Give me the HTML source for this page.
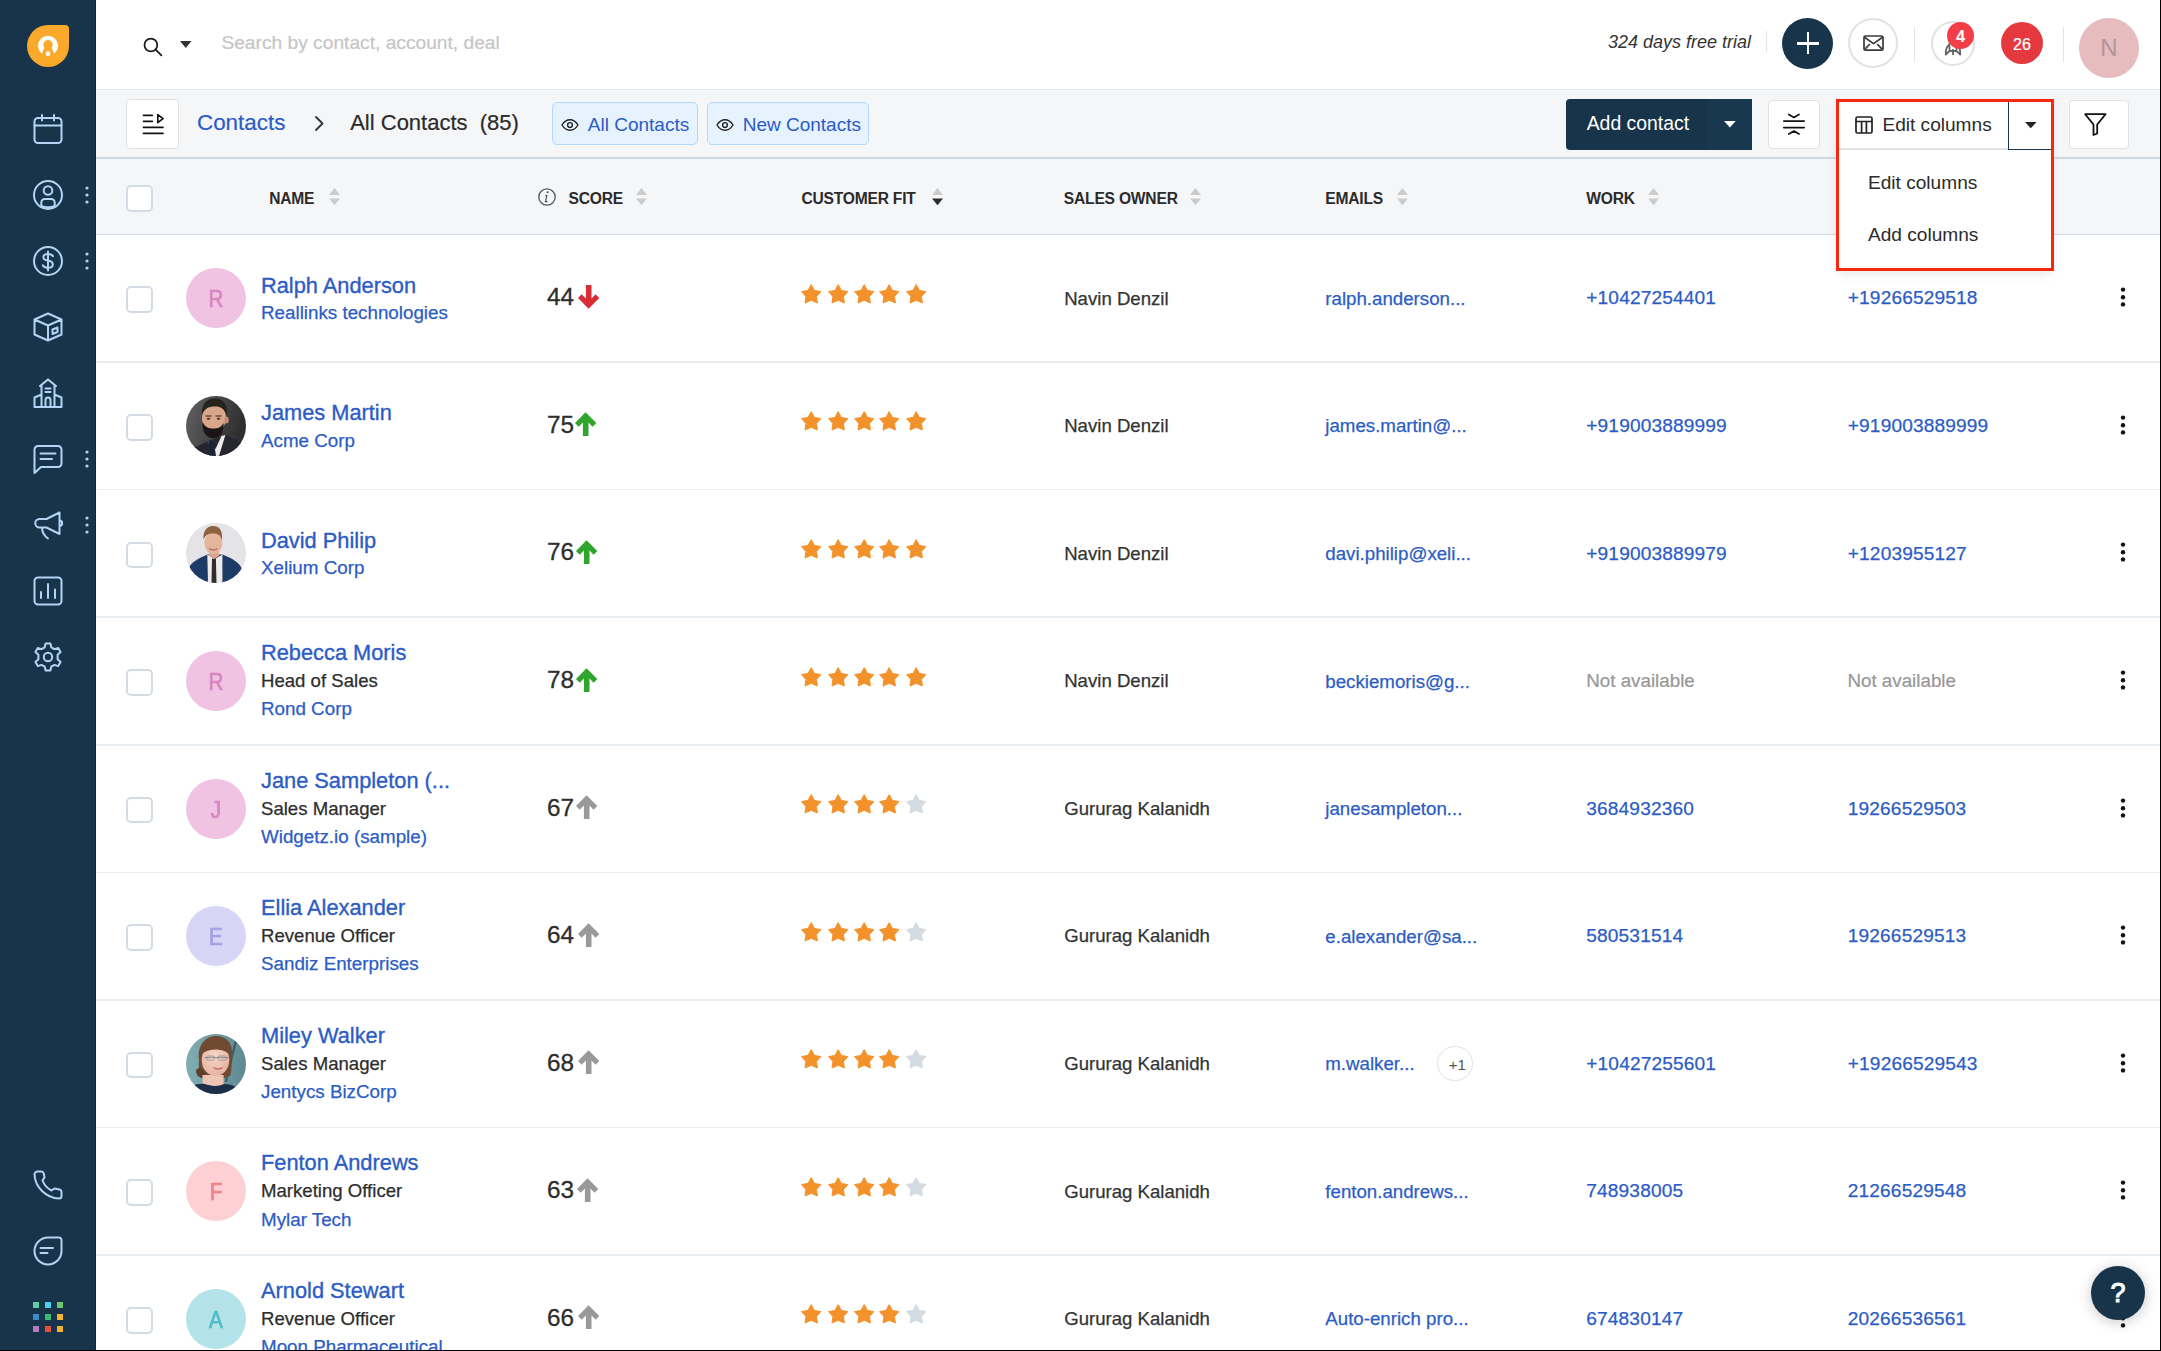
<!DOCTYPE html>
<html><head><meta charset="utf-8"><title>Contacts</title>
<style>
html,body{margin:0;padding:0;}
body{width:2161px;height:1351px;overflow:hidden;position:relative;background:#fff;font-family:"Liberation Sans", sans-serif;}
.t{position:absolute;white-space:nowrap;}
svg{overflow:visible}
</style></head><body>

<div style="position:absolute;left:96.00px;top:88.90px;width:2065.00px;height:1.30px;background:#e5e9ee"></div>
<div style="position:absolute;left:96.00px;top:90.20px;width:2065.00px;height:67.00px;background:#f5f6f8"></div>
<div style="position:absolute;left:96.00px;top:157.20px;width:2065.00px;height:1.60px;background:#d0d9e1"></div>
<div style="position:absolute;left:96.00px;top:158.80px;width:2065.00px;height:74.80px;background:#f5f6f8"></div>
<div style="position:absolute;left:96.00px;top:233.60px;width:2065.00px;height:1.60px;background:#d0d9e1"></div>
<div style="position:absolute;left:96.00px;top:361.32px;width:2065.00px;height:1.50px;background:#e8edf2"></div>
<div style="position:absolute;left:96.00px;top:488.89px;width:2065.00px;height:1.50px;background:#e8edf2"></div>
<div style="position:absolute;left:96.00px;top:616.46px;width:2065.00px;height:1.50px;background:#e8edf2"></div>
<div style="position:absolute;left:96.00px;top:744.03px;width:2065.00px;height:1.50px;background:#e8edf2"></div>
<div style="position:absolute;left:96.00px;top:871.60px;width:2065.00px;height:1.50px;background:#e8edf2"></div>
<div style="position:absolute;left:96.00px;top:999.17px;width:2065.00px;height:1.50px;background:#e8edf2"></div>
<div style="position:absolute;left:96.00px;top:1126.74px;width:2065.00px;height:1.50px;background:#e8edf2"></div>
<div style="position:absolute;left:96.00px;top:1254.31px;width:2065.00px;height:1.50px;background:#e8edf2"></div>
<div style="position:absolute;left:0.00px;top:0.00px;width:96.00px;height:1351.00px;background:#17344b"></div>
<div style="position:absolute;left:95.00px;top:0.00px;width:1.00px;height:1351.00px;background:#0a2840"></div>
<svg style="position:absolute;left:27.00px;top:24.50px;" width="42" height="42" viewBox="0 0 42 42">
<path d="M21 0 H38 A4 4 0 0 1 42 4 V21 A21 21 0 1 1 21 0 Z" fill="#fba92a"/>
<circle cx="21" cy="20.8" r="10" fill="#fff"/>
<path d="M17.6 22 L24.4 22 L28.2 31.5 L13.8 31.5 Z" fill="#fba92a"/>
<circle cx="21" cy="19.8" r="4.7" fill="#fba92a"/>
<circle cx="21" cy="28.7" r="2.4" fill="#fff"/>
</svg>
<svg style="position:absolute;left:33.00px;top:114.00px;" width="30" height="30" viewBox="0 0 30 30"><g fill="none" stroke="#b3d4f4" stroke-width="2" stroke-linecap="round" stroke-linejoin="round"><rect x="1.5" y="4" width="27" height="25" rx="3.5"/><path d="M1.5 11.5 H28.5 M9 1 V6.5 M21 1 V6.5"/></g></svg>
<svg style="position:absolute;left:33.00px;top:180.00px;" width="30" height="30" viewBox="0 0 30 30"><g fill="none" stroke="#b3d4f4" stroke-width="2" stroke-linecap="round" stroke-linejoin="round"><circle cx="15" cy="15" r="14"/><circle cx="15" cy="10.5" r="4.3"/><path d="M8.3 25.8 V22.5 A3.5 3.5 0 0 1 11.8 19 H18.2 A3.5 3.5 0 0 1 21.7 22.5 V25.8 C19 27.6 11 27.6 8.3 25.8 Z"/></g></svg>
<svg style="position:absolute;left:84.00px;top:186.00px;" width="6" height="18" viewBox="0 0 6 18"><g fill="#b3d4f4"><circle cx="3" cy="2" r="1.6"/><circle cx="3" cy="9" r="1.6"/><circle cx="3" cy="16" r="1.6"/></g></svg>
<svg style="position:absolute;left:33.00px;top:246.00px;" width="30" height="30" viewBox="0 0 30 30"><g fill="none" stroke="#b3d4f4" stroke-width="2" stroke-linecap="round" stroke-linejoin="round"><circle cx="15" cy="15" r="14"/><path d="M20 10.2 C19.2 8.6 17.4 8 15 8 C12.2 8 10.4 9.3 10.4 11.2 C10.4 13.4 12.6 14.1 15 14.6 C17.6 15.1 19.8 15.9 19.8 18.4 C19.8 20.5 17.8 21.8 15 21.8 C12.4 21.8 10.6 21 9.8 19.3 M15 5.5 V24.5"/></g></svg>
<svg style="position:absolute;left:84.00px;top:252.00px;" width="6" height="18" viewBox="0 0 6 18"><g fill="#b3d4f4"><circle cx="3" cy="2" r="1.6"/><circle cx="3" cy="9" r="1.6"/><circle cx="3" cy="16" r="1.6"/></g></svg>
<svg style="position:absolute;left:33.00px;top:312.00px;" width="30" height="30" viewBox="0 0 30 30"><g fill="none" stroke="#b3d4f4" stroke-width="2" stroke-linecap="round" stroke-linejoin="round"><path d="M15 1.5 L28.5 7.5 V22.5 L15 28.5 L1.5 22.5 V7.5 Z M1.5 7.5 L15 13.5 L28.5 7.5 M15 13.5 V28.5"/><path d="M19.5 17.5 L24.5 15.5 V20 L19.5 22 Z"/></g></svg>
<svg style="position:absolute;left:33.00px;top:378.00px;" width="30" height="30" viewBox="0 0 30 30"><g fill="none" stroke="#b3d4f4" stroke-width="2" stroke-linecap="round" stroke-linejoin="round"><path d="M15 1.5 L7 8 M15 1.5 L23 8 M8.5 7 V29 M21.5 7 V29 M1.5 29 H28.5 M1.5 29 V19.5 L8.5 16.5 M28.5 29 V19.5 L21.5 16.5 M12.5 10.5 H17.5 M12.5 14 H17.5 M12.5 29 V22 A2.5 2.5 0 0 1 17.5 22 V29"/></g></svg>
<svg style="position:absolute;left:33.00px;top:444.00px;" width="30" height="30" viewBox="0 0 30 30"><g fill="none" stroke="#b3d4f4" stroke-width="2" stroke-linecap="round" stroke-linejoin="round"><path d="M5 2 H25 A3.5 3.5 0 0 1 28.5 5.5 V19.5 A3.5 3.5 0 0 1 25 23 H8 L1.5 29 V5.5 A3.5 3.5 0 0 1 5 2 Z M7.5 9.5 H22.5 M7.5 15 H19"/></g></svg>
<svg style="position:absolute;left:84.00px;top:450.00px;" width="6" height="18" viewBox="0 0 6 18"><g fill="#b3d4f4"><circle cx="3" cy="2" r="1.6"/><circle cx="3" cy="9" r="1.6"/><circle cx="3" cy="16" r="1.6"/></g></svg>
<svg style="position:absolute;left:33.00px;top:510.00px;" width="30" height="30" viewBox="0 0 30 30"><g fill="none" stroke="#b3d4f4" stroke-width="2" stroke-linecap="round" stroke-linejoin="round"><path d="M6.5 9 H13.5 L26.5 2.5 V24 L13.5 17.5 H6.5 A4.25 4.25 0 0 1 6.5 9 Z M26.5 10.5 A2.6 2.6 0 0 1 26.5 15.8 M9 17.5 C9 22.5 11.5 26 15 28.5"/></g></svg>
<svg style="position:absolute;left:84.00px;top:516.00px;" width="6" height="18" viewBox="0 0 6 18"><g fill="#b3d4f4"><circle cx="3" cy="2" r="1.6"/><circle cx="3" cy="9" r="1.6"/><circle cx="3" cy="16" r="1.6"/></g></svg>
<svg style="position:absolute;left:33.00px;top:576.00px;" width="30" height="30" viewBox="0 0 30 30"><g fill="none" stroke="#b3d4f4" stroke-width="2" stroke-linecap="round" stroke-linejoin="round"><rect x="1.5" y="1.5" width="27" height="27" rx="3.5"/><path d="M8 22 V16 M15 22 V8 M22 22 V13.5"/></g></svg>
<svg style="position:absolute;left:33.00px;top:642.00px;" width="30" height="30" viewBox="0 0 30 30"><g fill="none" stroke="#b3d4f4" stroke-width="2" stroke-linecap="round" stroke-linejoin="round"><path d="M12.6 1.5 H17.4 L18.3 5.3 L21.4 7.1 L25.2 5.9 L27.6 10.1 L24.6 12.7 V17.3 L27.6 19.9 L25.2 24.1 L21.4 22.9 L18.3 24.7 L17.4 28.5 H12.6 L11.7 24.7 L8.6 22.9 L4.8 24.1 L2.4 19.9 L5.4 17.3 V12.7 L2.4 10.1 L4.8 5.9 L8.6 7.1 L11.7 5.3 Z"/><circle cx="15" cy="15" r="4.2"/></g></svg>
<svg style="position:absolute;left:33.00px;top:1170.00px;" width="30" height="30" viewBox="0 0 30 30"><g fill="none" stroke="#b3d4f4" stroke-width="2" stroke-linecap="round" stroke-linejoin="round"><path d="M4.5 1.5 H8.5 C9.6 1.5 10.5 2.4 10.8 3.5 L11.5 7.5 L9.5 10.5 C11 14.5 14.5 18.5 18.5 20.5 L21.5 18.5 L26.5 19.5 C27.6 19.8 28.5 20.6 28.5 21.7 V26 C28.5 27.5 27.5 28.5 26 28.5 C13 28 2 17 1.5 4.5 C1.5 3 2.8 1.5 4.5 1.5 Z"/></g></svg>
<svg style="position:absolute;left:33.00px;top:1236.00px;" width="30" height="30" viewBox="0 0 30 30"><g fill="none" stroke="#b3d4f4" stroke-width="2" stroke-linecap="round" stroke-linejoin="round"><path d="M15 1.5 H26 A2.5 2.5 0 0 1 28.5 4 V15 A13.5 13.5 0 1 1 15 1.5 Z M7.5 12 H20 M7.5 17 H14.5"/></g></svg>
<div style="position:absolute;left:32.80px;top:1301.70px;width:6.30px;height:6.30px;background:#5fcfa6"></div>
<div style="position:absolute;left:44.90px;top:1301.70px;width:6.30px;height:6.30px;background:#4ccfe4"></div>
<div style="position:absolute;left:57.00px;top:1301.70px;width:6.30px;height:6.30px;background:#6bc96b"></div>
<div style="position:absolute;left:32.80px;top:1313.90px;width:6.30px;height:6.30px;background:#3d8bca"></div>
<div style="position:absolute;left:44.90px;top:1313.90px;width:6.30px;height:6.30px;background:#3cbb6c"></div>
<div style="position:absolute;left:57.00px;top:1313.90px;width:6.30px;height:6.30px;background:#f6b52e"></div>
<div style="position:absolute;left:32.80px;top:1326.10px;width:6.30px;height:6.30px;background:#b67cc2"></div>
<div style="position:absolute;left:44.90px;top:1326.10px;width:6.30px;height:6.30px;background:#e5533e"></div>
<div style="position:absolute;left:57.00px;top:1326.10px;width:6.30px;height:6.30px;background:#f4b22f"></div>
<svg style="position:absolute;left:143.00px;top:37.00px;" width="20" height="20" viewBox="0 0 20 20"><g fill="none" stroke="#1a1a1a" stroke-width="1.75"><circle cx="7.9" cy="8" r="6.4"/><path d="M12.6 12.7 L18.4 18.4" stroke-linecap="round"/></g></svg>
<svg style="position:absolute;left:180.00px;top:41.00px;" width="12" height="7" viewBox="0 0 12 7"><path d="M0 0 H11.5 L5.75 7 Z" fill="#333"/></svg>
<div class="t " style="left:221.40px;top:33.45px;font-size:19.2px;line-height:19.2px;color:#c5c5c5;-webkit-text-stroke:0.2px #c5c5c5">Search by contact, account, deal</div>
<div class="t " style="left:1608.00px;top:33.06px;font-size:18px;line-height:18px;color:#333;font-style:italic">324 days free trial</div>
<div style="position:absolute;left:1765.80px;top:30.50px;width:1.20px;height:21.50px;background:#e4e4e4"></div>
<div style="position:absolute;left:1782.00px;top:17.80px;width:51.00px;height:51.00px;border-radius:50%;background:#17344b"></div>
<div style="position:absolute;left:1797.00px;top:42.20px;width:22.20px;height:2.60px;background:#fff"></div>
<div style="position:absolute;left:1806.80px;top:32.00px;width:2.60px;height:22.00px;background:#fff"></div>
<div style="position:absolute;left:1848.30px;top:18.30px;width:50.00px;height:50.00px;border-radius:50%;border:2px solid #e2e2e2;box-sizing:border-box;background:#fff"></div>
<svg style="position:absolute;left:1863.30px;top:35.30px;" width="21" height="16" viewBox="0 0 21 16"><g fill="none" stroke="#3a3a3a" stroke-width="1.7" stroke-linejoin="round"><rect x="1" y="1" width="19" height="14.2" rx="1.5"/><path d="M1.5 2.2 L10.5 8.6 L19.5 2.2 M2 14.2 L6.8 9 M19 14.2 L14.2 9"/></g></svg>
<div style="position:absolute;left:1914.20px;top:27.20px;width:1.20px;height:35.00px;background:#e4e4e4"></div>
<div style="position:absolute;left:1930.80px;top:21.20px;width:44.00px;height:44.50px;border-radius:50%;border:2px solid #e2e2e2;box-sizing:border-box;background:#fff"></div>
<svg style="position:absolute;left:1944.00px;top:30.00px;" width="18" height="26" viewBox="0 0 18 26"><g fill="none" stroke="#666" stroke-width="1.8" stroke-linejoin="round"><path d="M9 1 C6 5 5.5 10 5.5 14 V21 H12.5 V14 C12.5 10 12 5 9 1 Z M5.5 14.5 C2.5 16.5 1.5 20 1.8 24.5 L5.5 21 M12.5 14.5 C15.5 16.5 16.5 20 16.2 24.5 L12.5 21 M9 19 V25"/></g></svg>
<div style="position:absolute;left:1947.00px;top:22.10px;width:27.00px;height:27.30px;border-radius:50%;background:#f33e48"></div>
<div class="t" style="left:1947px;top:23.1px;width:27px;height:27.3px;line-height:27.3px;text-align:center;font-size:16.5px;font-weight:bold;color:#fff">4</div>
<div style="position:absolute;left:2001.00px;top:22.40px;width:42.00px;height:42.00px;border-radius:50%;background:#e5393f"></div>
<div class="t" style="left:2001px;top:23.4px;width:42px;height:42px;line-height:43px;text-align:center;font-size:16px;color:#fff;-webkit-text-stroke:0.2px #fff">26</div>
<div style="position:absolute;left:2062.80px;top:27.20px;width:1.20px;height:35.00px;background:#e4e4e4"></div>
<div style="position:absolute;left:2078.90px;top:17.80px;width:60.00px;height:60.00px;border-radius:50%;background:#e6bcbf"></div>
<div class="t" style="left:2078.9px;top:17.8px;width:60px;height:60px;line-height:60px;text-align:center;font-size:24px;color:#b3959a">N</div>
<div style="position:absolute;left:126.30px;top:99.30px;width:53.00px;height:50.00px;background:#fff;border:1px solid #e0e0e0;border-radius:4px;box-sizing:border-box"></div>
<svg style="position:absolute;left:142.00px;top:114.00px;" width="22" height="20" viewBox="0 0 22 20"><g fill="none" stroke="#111" stroke-width="1.7" stroke-linecap="round"><path d="M1.5 1.3 H10.3 M1.5 7.3 H10.3 M1.5 13.3 H21 M1.5 19.3 H21"/><path d="M15.8 0.6 L21 4.6 L15.8 8.6 Z" stroke-linejoin="round"/></g></svg>
<div class="t " style="left:197.00px;top:112.04px;font-size:22.4px;line-height:22.4px;color:#2c5cc5;-webkit-text-stroke:0.2px #2c5cc5">Contacts</div>
<svg style="position:absolute;left:315.00px;top:116.00px;" width="9" height="15" viewBox="0 0 9 15"><path d="M1 1 L7.5 7.5 L1 14" fill="none" stroke="#333" stroke-width="1.8" stroke-linecap="round" stroke-linejoin="round"/></svg>
<div class="t " style="left:350.20px;top:112.38px;font-size:22px;line-height:22px;color:#2b2b2b;-webkit-text-stroke:0.2px #2b2b2b">All Contacts&nbsp;&nbsp;(85)</div>
<div style="position:absolute;left:552.30px;top:102.30px;width:146.20px;height:42.30px;background:#e6f2fd;border:1.5px solid #b3d8fc;border-radius:5px;box-sizing:border-box"></div>
<svg style="position:absolute;left:561.30px;top:118.50px;" width="18" height="12" viewBox="0 0 18 12"><g fill="none" stroke="#222" stroke-width="1.4"><path d="M1 6 C3.5 2 6 0.8 9 0.8 C12 0.8 14.5 2 17 6 C14.5 10 12 11.2 9 11.2 C6 11.2 3.5 10 1 6 Z"/><circle cx="9" cy="6" r="2.4"/></g></svg>
<div class="t " style="left:587.80px;top:114.72px;font-size:19px;line-height:19px;color:#2c5cc5;">All Contacts</div>
<div style="position:absolute;left:707.20px;top:102.30px;width:162.30px;height:42.30px;background:#e6f2fd;border:1.5px solid #b3d8fc;border-radius:5px;box-sizing:border-box"></div>
<svg style="position:absolute;left:716.20px;top:118.50px;" width="18" height="12" viewBox="0 0 18 12"><g fill="none" stroke="#222" stroke-width="1.4"><path d="M1 6 C3.5 2 6 0.8 9 0.8 C12 0.8 14.5 2 17 6 C14.5 10 12 11.2 9 11.2 C6 11.2 3.5 10 1 6 Z"/><circle cx="9" cy="6" r="2.4"/></g></svg>
<div class="t " style="left:742.70px;top:114.72px;font-size:19px;line-height:19px;color:#2c5cc5;">New Contacts</div>
<div style="position:absolute;left:1566.00px;top:99.10px;width:186.00px;height:50.80px;background:#17344b;border-radius:4px 0 0 4px"></div>
<div style="position:absolute;left:1706.50px;top:99.10px;width:45.50px;height:50.80px;background:#183850"></div>
<div class="t " style="left:1586.70px;top:114.38px;font-size:19.4px;line-height:19.4px;color:#fff;">Add contact</div>
<svg style="position:absolute;left:1724.20px;top:121.10px;" width="12" height="7" viewBox="0 0 12 7"><path d="M0 0 H11.7 L5.85 6.5 Z" fill="#fff"/></svg>
<div style="position:absolute;left:1767.50px;top:99.70px;width:52.50px;height:49.60px;background:#fff;border:1px solid #e2e2e2;border-radius:4px;box-sizing:border-box"></div>
<svg style="position:absolute;left:1783.00px;top:113.00px;" width="23" height="23" viewBox="0 0 23 23"><g fill="none" stroke="#111" stroke-width="1.7" stroke-linecap="round" stroke-linejoin="round"><path d="M0.8 8.1 H21.2 M0.8 14.6 H21.2 M5.8 1.5 L10.9 4.5 L16 1.5 M5.8 21 L10.9 18 L16 21"/></g></svg>
<div style="position:absolute;left:2069.30px;top:99.80px;width:59.80px;height:49.00px;background:#fff;border:1px solid #e2e2e2;border-radius:4px;box-sizing:border-box"></div>
<svg style="position:absolute;left:2084.00px;top:113.00px;" width="23" height="23" viewBox="0 0 23 23"><path d="M1.2 1.2 H21.5 L13.2 11.5 V20.5 L9.5 22 V11.5 Z" fill="none" stroke="#111" stroke-width="1.8" stroke-linejoin="round"/></svg>
<div style="position:absolute;left:126.20px;top:185.00px;width:26.60px;height:26.60px;background:#fff;border:2px solid #d3dce5;border-radius:5px;box-sizing:border-box"></div>
<div class="t " style="left:269.20px;top:190.59px;font-size:15.6px;line-height:15.6px;color:#2b2b2b;font-weight:bold;letter-spacing:-0.2px">NAME</div>
<svg style="position:absolute;left:329.20px;top:188.00px;" width="11" height="17" viewBox="0 0 11 17"><path d="M0 7 L5.5 0 L11 7 Z" fill="#cbcbcb"/><path d="M0 10.4 H11 L5.5 17.2 Z" fill="#cbcbcb"/></svg>
<svg style="position:absolute;left:538.40px;top:188.00px;" width="18" height="18" viewBox="0 0 18 18"><circle cx="9" cy="9" r="8.2" fill="none" stroke="#555" stroke-width="1.3"/><path d="M9.6 4.2 h0.2" stroke="#555" stroke-width="1.8" stroke-linecap="round"/><path d="M8.8 7.6 L7.6 13.6 M7.2 13.6 H9.2 M7.7 7.6 H9" stroke="#555" stroke-width="1.2" fill="none" stroke-linecap="round"/></svg>
<div class="t " style="left:568.60px;top:190.59px;font-size:15.6px;line-height:15.6px;color:#2b2b2b;font-weight:bold;letter-spacing:-0.2px">SCORE</div>
<svg style="position:absolute;left:635.50px;top:188.00px;" width="11" height="17" viewBox="0 0 11 17"><path d="M0 7 L5.5 0 L11 7 Z" fill="#cbcbcb"/><path d="M0 10.4 H11 L5.5 17.2 Z" fill="#cbcbcb"/></svg>
<div class="t " style="left:801.40px;top:190.59px;font-size:15.6px;line-height:15.6px;color:#2b2b2b;font-weight:bold;letter-spacing:-0.2px">CUSTOMER FIT</div>
<svg style="position:absolute;left:932.00px;top:188.00px;" width="11" height="17" viewBox="0 0 11 17"><path d="M0 7 L5.5 0 L11 7 Z" fill="#cbcbcb"/><path d="M0 10.4 H11 L5.5 17.2 Z" fill="#2b2b2b"/></svg>
<div class="t " style="left:1063.80px;top:190.59px;font-size:15.6px;line-height:15.6px;color:#2b2b2b;font-weight:bold;letter-spacing:-0.2px">SALES OWNER</div>
<svg style="position:absolute;left:1190.00px;top:188.00px;" width="11" height="17" viewBox="0 0 11 17"><path d="M0 7 L5.5 0 L11 7 Z" fill="#cbcbcb"/><path d="M0 10.4 H11 L5.5 17.2 Z" fill="#cbcbcb"/></svg>
<div class="t " style="left:1325.30px;top:190.59px;font-size:15.6px;line-height:15.6px;color:#2b2b2b;font-weight:bold;letter-spacing:-0.2px">EMAILS</div>
<svg style="position:absolute;left:1397.00px;top:188.00px;" width="11" height="17" viewBox="0 0 11 17"><path d="M0 7 L5.5 0 L11 7 Z" fill="#cbcbcb"/><path d="M0 10.4 H11 L5.5 17.2 Z" fill="#cbcbcb"/></svg>
<div class="t " style="left:1586.20px;top:190.59px;font-size:15.6px;line-height:15.6px;color:#2b2b2b;font-weight:bold;letter-spacing:-0.2px">WORK</div>
<svg style="position:absolute;left:1647.70px;top:188.00px;" width="11" height="17" viewBox="0 0 11 17"><path d="M0 7 L5.5 0 L11 7 Z" fill="#cbcbcb"/><path d="M0 10.4 H11 L5.5 17.2 Z" fill="#cbcbcb"/></svg>
<div class="t " style="left:1847.00px;top:190.59px;font-size:15.6px;line-height:15.6px;color:#2b2b2b;font-weight:bold;letter-spacing:-0.2px">MOBILE</div>
<div style="position:absolute;left:126.20px;top:286.48px;width:26.60px;height:26.60px;background:#fff;border:2px solid #d3dce5;border-radius:5px;box-sizing:border-box"></div>
<div style="position:absolute;left:186.00px;top:268.28px;width:60.00px;height:60.00px;border-radius:50%;background:#f0c3e3"></div>
<div class="t" style="left:186px;top:268.28px;width:60px;height:60px;line-height:62px;text-align:center;font-size:24px;color:#d686c2;-webkit-text-stroke:0.7px #d686c2;transform:scaleX(0.86)">R</div>
<div class="t " style="left:261.00px;top:274.83px;font-size:21.8px;line-height:21.8px;color:#2c5cc5;-webkit-text-stroke:0.35px #2c5cc5">Ralph Anderson</div>
<div class="t " style="left:261.00px;top:304.07px;font-size:18.8px;line-height:18.8px;color:#2c5cc5;-webkit-text-stroke:0.25px #2c5cc5">Reallinks technologies</div>
<div class="t " style="left:547.00px;top:285.32px;font-size:24.3px;line-height:24.3px;color:#2e2e2e;-webkit-text-stroke:0.3px #2e2e2e">44</div>
<svg style="position:absolute;left:578.00px;top:284.78px;" width="21.3" height="24" viewBox="0 0 21.3 24"><path d="M7.9 0 H13.5 V13.4 L17.6 9.3 L21.3 13.1 L10.6 23.8 L0 13.1 L3.7 9.3 L7.9 13.5 Z" fill="#d82d36"/></svg>
<svg style="position:absolute;left:801.20px;top:283.78px;" width="20.4" height="19.5" viewBox="0 0 20.4 19.5"><path d="M10.2 0.6 L13.4 6.4 L19.9 7.6 L15.5 12.6 L16.4 19 L10.2 16.3 L4 19 L4.9 12.6 L0.5 7.6 L7 6.4 Z" fill="#f3922b" stroke="#f3922b" stroke-width="1" stroke-linejoin="round"/></svg>
<svg style="position:absolute;left:827.60px;top:283.78px;" width="20.4" height="19.5" viewBox="0 0 20.4 19.5"><path d="M10.2 0.6 L13.4 6.4 L19.9 7.6 L15.5 12.6 L16.4 19 L10.2 16.3 L4 19 L4.9 12.6 L0.5 7.6 L7 6.4 Z" fill="#f3922b" stroke="#f3922b" stroke-width="1" stroke-linejoin="round"/></svg>
<svg style="position:absolute;left:853.60px;top:283.78px;" width="20.4" height="19.5" viewBox="0 0 20.4 19.5"><path d="M10.2 0.6 L13.4 6.4 L19.9 7.6 L15.5 12.6 L16.4 19 L10.2 16.3 L4 19 L4.9 12.6 L0.5 7.6 L7 6.4 Z" fill="#f3922b" stroke="#f3922b" stroke-width="1" stroke-linejoin="round"/></svg>
<svg style="position:absolute;left:879.20px;top:283.78px;" width="20.4" height="19.5" viewBox="0 0 20.4 19.5"><path d="M10.2 0.6 L13.4 6.4 L19.9 7.6 L15.5 12.6 L16.4 19 L10.2 16.3 L4 19 L4.9 12.6 L0.5 7.6 L7 6.4 Z" fill="#f3922b" stroke="#f3922b" stroke-width="1" stroke-linejoin="round"/></svg>
<svg style="position:absolute;left:906.00px;top:283.78px;" width="20.4" height="19.5" viewBox="0 0 20.4 19.5"><path d="M10.2 0.6 L13.4 6.4 L19.9 7.6 L15.5 12.6 L16.4 19 L10.2 16.3 L4 19 L4.9 12.6 L0.5 7.6 L7 6.4 Z" fill="#f3922b" stroke="#f3922b" stroke-width="1" stroke-linejoin="round"/></svg>
<div class="t " style="left:1064.20px;top:289.54px;font-size:18.6px;line-height:18.6px;color:#333;-webkit-text-stroke:0.25px #333">Navin Denzil</div>
<div class="t " style="left:1325.30px;top:289.86px;font-size:18.7px;line-height:18.7px;color:#2c5cc5;-webkit-text-stroke:0.25px #2c5cc5">ralph.anderson...</div>
<div class="t " style="left:1586.30px;top:288.42px;font-size:19.1px;line-height:19.1px;color:#2c5cc5;-webkit-text-stroke:0.25px #2c5cc5;letter-spacing:0.15px">+10427254401</div>
<div class="t " style="left:1847.80px;top:288.42px;font-size:19.1px;line-height:19.1px;color:#2c5cc5;-webkit-text-stroke:0.25px #2c5cc5;letter-spacing:0.15px">+19266529518</div>
<svg style="position:absolute;left:2119.80px;top:287.28px;" width="6" height="20" viewBox="0 0 6 20"><g fill="#111"><circle cx="3" cy="2.6" r="2.2"/><circle cx="3" cy="10.2" r="2.2"/><circle cx="3" cy="17.4" r="2.2"/></g></svg>
<div style="position:absolute;left:126.20px;top:414.06px;width:26.60px;height:26.60px;background:#fff;border:2px solid #d3dce5;border-radius:5px;box-sizing:border-box"></div>
<svg style="position:absolute;left:186.00px;top:395.86px;" width="60" height="60" viewBox="0 0 60 60"><defs><clipPath id="cj"><circle cx="30" cy="30" r="30"/></clipPath>
  <linearGradient id="gj" x1="0" y1="0" x2="1" y2="0.3"><stop offset="0" stop-color="#616161"/><stop offset="1" stop-color="#2f2f2f"/></linearGradient>
  <filter id="bj" x="-10%" y="-10%" width="120%" height="120%"><feGaussianBlur stdDeviation="0.45"/></filter></defs>
  <g clip-path="url(#cj)"><rect width="60" height="60" fill="url(#gj)"/><g filter="url(#bj)">
  <path d="M2 60 C4 54 8 51 12 50 L22 45 L40 39 L50 44 C55 46 58 50 60 55 V60 Z" fill="#25262d"/>
  <path d="M21.6 45 L28 60 H33 L39.4 39 L35.5 40 L29.5 53 Z" fill="#ececec"/>
  <path d="M22.2 46 L25 60 H30 L28.1 47.5 L25.5 45.2 Z" fill="#1d2435"/>
  <ellipse cx="28" cy="22" rx="12" ry="14" fill="#d9a68c"/>
  <ellipse cx="40.5" cy="24" rx="2.2" ry="3.6" fill="#c38d76"/>
  <path d="M16 19 C15 8 21 2.6 29 2.6 C37 2.6 42 8 41 20 C39 13 35 10.5 29 10.5 C22 10.5 18 13 16 19 Z" fill="#27211e"/>
  <path d="M16.6 26 C16 37 21 42.3 27.5 42.3 C34 42.3 38 37 37.6 27 C35 31.5 32 32.5 27.5 32.5 C23 32.5 19 31.5 16.6 26 Z" fill="#1b1817"/>
  <ellipse cx="22.5" cy="22.8" rx="1.8" ry="1" fill="#4a3328"/><ellipse cx="32.5" cy="22.8" rx="1.8" ry="1" fill="#4a3328"/><path d="M19.5 20 H25.5 M29.5 20 H35.5" stroke="#2a211d" stroke-width="1.1"/>
  </g></g></svg>
<div class="t " style="left:261.00px;top:402.40px;font-size:21.8px;line-height:21.8px;color:#2c5cc5;-webkit-text-stroke:0.35px #2c5cc5">James Martin</div>
<div class="t " style="left:261.00px;top:431.64px;font-size:18.8px;line-height:18.8px;color:#2c5cc5;-webkit-text-stroke:0.25px #2c5cc5">Acme Corp</div>
<div class="t " style="left:547.00px;top:412.89px;font-size:24.3px;line-height:24.3px;color:#2e2e2e;-webkit-text-stroke:0.3px #2e2e2e">75</div>
<svg style="position:absolute;left:575.40px;top:412.36px;" width="21.3" height="24" viewBox="0 0 21.3 24"><path d="M7.9 24 H13.5 V10.6 L17.6 14.7 L21.3 10.9 L10.6 0.2 L0 10.9 L3.7 14.7 L7.9 10.5 Z" fill="#2fa52c"/></svg>
<svg style="position:absolute;left:801.20px;top:411.36px;" width="20.4" height="19.5" viewBox="0 0 20.4 19.5"><path d="M10.2 0.6 L13.4 6.4 L19.9 7.6 L15.5 12.6 L16.4 19 L10.2 16.3 L4 19 L4.9 12.6 L0.5 7.6 L7 6.4 Z" fill="#f3922b" stroke="#f3922b" stroke-width="1" stroke-linejoin="round"/></svg>
<svg style="position:absolute;left:827.60px;top:411.36px;" width="20.4" height="19.5" viewBox="0 0 20.4 19.5"><path d="M10.2 0.6 L13.4 6.4 L19.9 7.6 L15.5 12.6 L16.4 19 L10.2 16.3 L4 19 L4.9 12.6 L0.5 7.6 L7 6.4 Z" fill="#f3922b" stroke="#f3922b" stroke-width="1" stroke-linejoin="round"/></svg>
<svg style="position:absolute;left:853.60px;top:411.36px;" width="20.4" height="19.5" viewBox="0 0 20.4 19.5"><path d="M10.2 0.6 L13.4 6.4 L19.9 7.6 L15.5 12.6 L16.4 19 L10.2 16.3 L4 19 L4.9 12.6 L0.5 7.6 L7 6.4 Z" fill="#f3922b" stroke="#f3922b" stroke-width="1" stroke-linejoin="round"/></svg>
<svg style="position:absolute;left:879.20px;top:411.36px;" width="20.4" height="19.5" viewBox="0 0 20.4 19.5"><path d="M10.2 0.6 L13.4 6.4 L19.9 7.6 L15.5 12.6 L16.4 19 L10.2 16.3 L4 19 L4.9 12.6 L0.5 7.6 L7 6.4 Z" fill="#f3922b" stroke="#f3922b" stroke-width="1" stroke-linejoin="round"/></svg>
<svg style="position:absolute;left:906.00px;top:411.36px;" width="20.4" height="19.5" viewBox="0 0 20.4 19.5"><path d="M10.2 0.6 L13.4 6.4 L19.9 7.6 L15.5 12.6 L16.4 19 L10.2 16.3 L4 19 L4.9 12.6 L0.5 7.6 L7 6.4 Z" fill="#f3922b" stroke="#f3922b" stroke-width="1" stroke-linejoin="round"/></svg>
<div class="t " style="left:1064.20px;top:417.11px;font-size:18.6px;line-height:18.6px;color:#333;-webkit-text-stroke:0.25px #333">Navin Denzil</div>
<div class="t " style="left:1325.30px;top:417.43px;font-size:18.7px;line-height:18.7px;color:#2c5cc5;-webkit-text-stroke:0.25px #2c5cc5">james.martin@...</div>
<div class="t " style="left:1586.30px;top:415.99px;font-size:19.1px;line-height:19.1px;color:#2c5cc5;-webkit-text-stroke:0.25px #2c5cc5;letter-spacing:0.15px">+919003889999</div>
<div class="t " style="left:1847.80px;top:415.99px;font-size:19.1px;line-height:19.1px;color:#2c5cc5;-webkit-text-stroke:0.25px #2c5cc5;letter-spacing:0.15px">+919003889999</div>
<svg style="position:absolute;left:2119.80px;top:414.86px;" width="6" height="20" viewBox="0 0 6 20"><g fill="#111"><circle cx="3" cy="2.6" r="2.2"/><circle cx="3" cy="10.2" r="2.2"/><circle cx="3" cy="17.4" r="2.2"/></g></svg>
<div style="position:absolute;left:126.20px;top:541.62px;width:26.60px;height:26.60px;background:#fff;border:2px solid #d3dce5;border-radius:5px;box-sizing:border-box"></div>
<svg style="position:absolute;left:186.00px;top:523.42px;" width="60" height="60" viewBox="0 0 60 60"><defs><clipPath id="cd"><circle cx="30" cy="30" r="30"/></clipPath>
  <filter id="bd" x="-10%" y="-10%" width="120%" height="120%"><feGaussianBlur stdDeviation="0.45"/></filter></defs>
  <g clip-path="url(#cd)"><rect width="60" height="60" fill="#e4e3e5"/><g filter="url(#bd)">
  <path d="M3.3 44 C5 40 12 35 21.6 31.4 L36.4 31.4 C46 35 54 40 56 46 L60 60 H0 Z" fill="#1f3a66"/>
  <path d="M21.3 31.4 L22 60 H36.4 L36.4 31.4 L29 36 Z" fill="#efeaec"/>
  <path d="M26 35.5 H29.9 L30.5 60 H25.5 Z" fill="#2e2e2e"/>
  <path d="M23 27 H33 V33 L28 36 L23 33 Z" fill="#d9a68d"/>
  <ellipse cx="27.4" cy="20" rx="9" ry="11.2" fill="#e3b59c"/>
  <path d="M17.5 17 C16.5 8 21 2.9 27 2.9 C33 2.9 37 7 36 17 C34.5 12 32 10.5 27 10.5 C22 10.5 19 12 17.5 17 Z" fill="#8c6241"/>
  <path d="M23 25.5 C25 27.5 29.5 27.5 31.5 25.5" stroke="#b46f62" stroke-width="1.3" fill="none"/>
  </g></g></svg>
<div class="t " style="left:261.00px;top:529.97px;font-size:21.8px;line-height:21.8px;color:#2c5cc5;-webkit-text-stroke:0.35px #2c5cc5">David Philip</div>
<div class="t " style="left:261.00px;top:559.21px;font-size:18.8px;line-height:18.8px;color:#2c5cc5;-webkit-text-stroke:0.25px #2c5cc5">Xelium Corp</div>
<div class="t " style="left:547.00px;top:540.46px;font-size:24.3px;line-height:24.3px;color:#2e2e2e;-webkit-text-stroke:0.3px #2e2e2e">76</div>
<svg style="position:absolute;left:575.90px;top:539.92px;" width="21.3" height="24" viewBox="0 0 21.3 24"><path d="M7.9 24 H13.5 V10.6 L17.6 14.7 L21.3 10.9 L10.6 0.2 L0 10.9 L3.7 14.7 L7.9 10.5 Z" fill="#2fa52c"/></svg>
<svg style="position:absolute;left:801.20px;top:538.92px;" width="20.4" height="19.5" viewBox="0 0 20.4 19.5"><path d="M10.2 0.6 L13.4 6.4 L19.9 7.6 L15.5 12.6 L16.4 19 L10.2 16.3 L4 19 L4.9 12.6 L0.5 7.6 L7 6.4 Z" fill="#f3922b" stroke="#f3922b" stroke-width="1" stroke-linejoin="round"/></svg>
<svg style="position:absolute;left:827.60px;top:538.92px;" width="20.4" height="19.5" viewBox="0 0 20.4 19.5"><path d="M10.2 0.6 L13.4 6.4 L19.9 7.6 L15.5 12.6 L16.4 19 L10.2 16.3 L4 19 L4.9 12.6 L0.5 7.6 L7 6.4 Z" fill="#f3922b" stroke="#f3922b" stroke-width="1" stroke-linejoin="round"/></svg>
<svg style="position:absolute;left:853.60px;top:538.92px;" width="20.4" height="19.5" viewBox="0 0 20.4 19.5"><path d="M10.2 0.6 L13.4 6.4 L19.9 7.6 L15.5 12.6 L16.4 19 L10.2 16.3 L4 19 L4.9 12.6 L0.5 7.6 L7 6.4 Z" fill="#f3922b" stroke="#f3922b" stroke-width="1" stroke-linejoin="round"/></svg>
<svg style="position:absolute;left:879.20px;top:538.92px;" width="20.4" height="19.5" viewBox="0 0 20.4 19.5"><path d="M10.2 0.6 L13.4 6.4 L19.9 7.6 L15.5 12.6 L16.4 19 L10.2 16.3 L4 19 L4.9 12.6 L0.5 7.6 L7 6.4 Z" fill="#f3922b" stroke="#f3922b" stroke-width="1" stroke-linejoin="round"/></svg>
<svg style="position:absolute;left:906.00px;top:538.92px;" width="20.4" height="19.5" viewBox="0 0 20.4 19.5"><path d="M10.2 0.6 L13.4 6.4 L19.9 7.6 L15.5 12.6 L16.4 19 L10.2 16.3 L4 19 L4.9 12.6 L0.5 7.6 L7 6.4 Z" fill="#f3922b" stroke="#f3922b" stroke-width="1" stroke-linejoin="round"/></svg>
<div class="t " style="left:1064.20px;top:544.68px;font-size:18.6px;line-height:18.6px;color:#333;-webkit-text-stroke:0.25px #333">Navin Denzil</div>
<div class="t " style="left:1325.30px;top:545.00px;font-size:18.7px;line-height:18.7px;color:#2c5cc5;-webkit-text-stroke:0.25px #2c5cc5">davi.philip@xeli...</div>
<div class="t " style="left:1586.30px;top:543.56px;font-size:19.1px;line-height:19.1px;color:#2c5cc5;-webkit-text-stroke:0.25px #2c5cc5;letter-spacing:0.15px">+919003889979</div>
<div class="t " style="left:1847.80px;top:543.56px;font-size:19.1px;line-height:19.1px;color:#2c5cc5;-webkit-text-stroke:0.25px #2c5cc5;letter-spacing:0.15px">+1203955127</div>
<svg style="position:absolute;left:2119.80px;top:542.42px;" width="6" height="20" viewBox="0 0 6 20"><g fill="#111"><circle cx="3" cy="2.6" r="2.2"/><circle cx="3" cy="10.2" r="2.2"/><circle cx="3" cy="17.4" r="2.2"/></g></svg>
<div style="position:absolute;left:126.20px;top:669.20px;width:26.60px;height:26.60px;background:#fff;border:2px solid #d3dce5;border-radius:5px;box-sizing:border-box"></div>
<div style="position:absolute;left:186.00px;top:651.00px;width:60.00px;height:60.00px;border-radius:50%;background:#f0c3e3"></div>
<div class="t" style="left:186px;top:651.00px;width:60px;height:60px;line-height:62px;text-align:center;font-size:24px;color:#d686c2;-webkit-text-stroke:0.7px #d686c2;transform:scaleX(0.86)">R</div>
<div class="t " style="left:261.00px;top:642.14px;font-size:21.8px;line-height:21.8px;color:#2c5cc5;-webkit-text-stroke:0.35px #2c5cc5">Rebecca Moris</div>
<div class="t " style="left:261.00px;top:672.05px;font-size:18.6px;line-height:18.6px;color:#2d2d2d;-webkit-text-stroke:0.25px #2d2d2d">Head of Sales</div>
<div class="t " style="left:261.00px;top:700.28px;font-size:18.8px;line-height:18.8px;color:#2c5cc5;-webkit-text-stroke:0.25px #2c5cc5">Rond Corp</div>
<div class="t " style="left:547.00px;top:668.03px;font-size:24.3px;line-height:24.3px;color:#2e2e2e;-webkit-text-stroke:0.3px #2e2e2e">78</div>
<svg style="position:absolute;left:575.90px;top:667.50px;" width="21.3" height="24" viewBox="0 0 21.3 24"><path d="M7.9 24 H13.5 V10.6 L17.6 14.7 L21.3 10.9 L10.6 0.2 L0 10.9 L3.7 14.7 L7.9 10.5 Z" fill="#2fa52c"/></svg>
<svg style="position:absolute;left:801.20px;top:666.50px;" width="20.4" height="19.5" viewBox="0 0 20.4 19.5"><path d="M10.2 0.6 L13.4 6.4 L19.9 7.6 L15.5 12.6 L16.4 19 L10.2 16.3 L4 19 L4.9 12.6 L0.5 7.6 L7 6.4 Z" fill="#f3922b" stroke="#f3922b" stroke-width="1" stroke-linejoin="round"/></svg>
<svg style="position:absolute;left:827.60px;top:666.50px;" width="20.4" height="19.5" viewBox="0 0 20.4 19.5"><path d="M10.2 0.6 L13.4 6.4 L19.9 7.6 L15.5 12.6 L16.4 19 L10.2 16.3 L4 19 L4.9 12.6 L0.5 7.6 L7 6.4 Z" fill="#f3922b" stroke="#f3922b" stroke-width="1" stroke-linejoin="round"/></svg>
<svg style="position:absolute;left:853.60px;top:666.50px;" width="20.4" height="19.5" viewBox="0 0 20.4 19.5"><path d="M10.2 0.6 L13.4 6.4 L19.9 7.6 L15.5 12.6 L16.4 19 L10.2 16.3 L4 19 L4.9 12.6 L0.5 7.6 L7 6.4 Z" fill="#f3922b" stroke="#f3922b" stroke-width="1" stroke-linejoin="round"/></svg>
<svg style="position:absolute;left:879.20px;top:666.50px;" width="20.4" height="19.5" viewBox="0 0 20.4 19.5"><path d="M10.2 0.6 L13.4 6.4 L19.9 7.6 L15.5 12.6 L16.4 19 L10.2 16.3 L4 19 L4.9 12.6 L0.5 7.6 L7 6.4 Z" fill="#f3922b" stroke="#f3922b" stroke-width="1" stroke-linejoin="round"/></svg>
<svg style="position:absolute;left:906.00px;top:666.50px;" width="20.4" height="19.5" viewBox="0 0 20.4 19.5"><path d="M10.2 0.6 L13.4 6.4 L19.9 7.6 L15.5 12.6 L16.4 19 L10.2 16.3 L4 19 L4.9 12.6 L0.5 7.6 L7 6.4 Z" fill="#f3922b" stroke="#f3922b" stroke-width="1" stroke-linejoin="round"/></svg>
<div class="t " style="left:1064.20px;top:672.25px;font-size:18.6px;line-height:18.6px;color:#333;-webkit-text-stroke:0.25px #333">Navin Denzil</div>
<div class="t " style="left:1325.30px;top:672.57px;font-size:18.7px;line-height:18.7px;color:#2c5cc5;-webkit-text-stroke:0.25px #2c5cc5">beckiemoris@g...</div>
<div class="t " style="left:1586.20px;top:671.88px;font-size:18.8px;line-height:18.8px;color:#979797;-webkit-text-stroke:0.2px #979797">Not available</div>
<div class="t " style="left:1847.40px;top:671.88px;font-size:18.8px;line-height:18.8px;color:#979797;-webkit-text-stroke:0.2px #979797">Not available</div>
<svg style="position:absolute;left:2119.80px;top:670.00px;" width="6" height="20" viewBox="0 0 6 20"><g fill="#111"><circle cx="3" cy="2.6" r="2.2"/><circle cx="3" cy="10.2" r="2.2"/><circle cx="3" cy="17.4" r="2.2"/></g></svg>
<div style="position:absolute;left:126.20px;top:796.76px;width:26.60px;height:26.60px;background:#fff;border:2px solid #d3dce5;border-radius:5px;box-sizing:border-box"></div>
<div style="position:absolute;left:186.00px;top:778.56px;width:60.00px;height:60.00px;border-radius:50%;background:#f0c3e3"></div>
<div class="t" style="left:186px;top:778.56px;width:60px;height:60px;line-height:62px;text-align:center;font-size:24px;color:#d686c2;-webkit-text-stroke:0.7px #d686c2;transform:scaleX(0.86)">J</div>
<div class="t " style="left:261.00px;top:769.71px;font-size:21.8px;line-height:21.8px;color:#2c5cc5;-webkit-text-stroke:0.35px #2c5cc5">Jane Sampleton (...</div>
<div class="t " style="left:261.00px;top:799.62px;font-size:18.6px;line-height:18.6px;color:#2d2d2d;-webkit-text-stroke:0.25px #2d2d2d">Sales Manager</div>
<div class="t " style="left:261.00px;top:827.85px;font-size:18.8px;line-height:18.8px;color:#2c5cc5;-webkit-text-stroke:0.25px #2c5cc5">Widgetz.io (sample)</div>
<div class="t " style="left:547.00px;top:795.60px;font-size:24.3px;line-height:24.3px;color:#2e2e2e;-webkit-text-stroke:0.3px #2e2e2e">67</div>
<svg style="position:absolute;left:576.40px;top:795.06px;" width="21.3" height="24" viewBox="0 0 21.3 24"><path d="M7.9 24 H13.5 V10.6 L17.6 14.7 L21.3 10.9 L10.6 0.2 L0 10.9 L3.7 14.7 L7.9 10.5 Z" fill="#999999"/></svg>
<svg style="position:absolute;left:801.20px;top:794.06px;" width="20.4" height="19.5" viewBox="0 0 20.4 19.5"><path d="M10.2 0.6 L13.4 6.4 L19.9 7.6 L15.5 12.6 L16.4 19 L10.2 16.3 L4 19 L4.9 12.6 L0.5 7.6 L7 6.4 Z" fill="#f3922b" stroke="#f3922b" stroke-width="1" stroke-linejoin="round"/></svg>
<svg style="position:absolute;left:827.60px;top:794.06px;" width="20.4" height="19.5" viewBox="0 0 20.4 19.5"><path d="M10.2 0.6 L13.4 6.4 L19.9 7.6 L15.5 12.6 L16.4 19 L10.2 16.3 L4 19 L4.9 12.6 L0.5 7.6 L7 6.4 Z" fill="#f3922b" stroke="#f3922b" stroke-width="1" stroke-linejoin="round"/></svg>
<svg style="position:absolute;left:853.60px;top:794.06px;" width="20.4" height="19.5" viewBox="0 0 20.4 19.5"><path d="M10.2 0.6 L13.4 6.4 L19.9 7.6 L15.5 12.6 L16.4 19 L10.2 16.3 L4 19 L4.9 12.6 L0.5 7.6 L7 6.4 Z" fill="#f3922b" stroke="#f3922b" stroke-width="1" stroke-linejoin="round"/></svg>
<svg style="position:absolute;left:879.20px;top:794.06px;" width="20.4" height="19.5" viewBox="0 0 20.4 19.5"><path d="M10.2 0.6 L13.4 6.4 L19.9 7.6 L15.5 12.6 L16.4 19 L10.2 16.3 L4 19 L4.9 12.6 L0.5 7.6 L7 6.4 Z" fill="#f3922b" stroke="#f3922b" stroke-width="1" stroke-linejoin="round"/></svg>
<svg style="position:absolute;left:906.00px;top:794.06px;" width="20.4" height="19.5" viewBox="0 0 20.4 19.5"><path d="M10.2 0.6 L13.4 6.4 L19.9 7.6 L15.5 12.6 L16.4 19 L10.2 16.3 L4 19 L4.9 12.6 L0.5 7.6 L7 6.4 Z" fill="#d3dbe3" stroke="#d3dbe3" stroke-width="1" stroke-linejoin="round"/></svg>
<div class="t " style="left:1064.20px;top:799.82px;font-size:18.6px;line-height:18.6px;color:#333;-webkit-text-stroke:0.25px #333">Gururag Kalanidh</div>
<div class="t " style="left:1325.30px;top:800.14px;font-size:18.7px;line-height:18.7px;color:#2c5cc5;-webkit-text-stroke:0.25px #2c5cc5">janesampleton...</div>
<div class="t " style="left:1586.30px;top:798.70px;font-size:19.1px;line-height:19.1px;color:#2c5cc5;-webkit-text-stroke:0.25px #2c5cc5;letter-spacing:0.15px">3684932360</div>
<div class="t " style="left:1847.80px;top:798.70px;font-size:19.1px;line-height:19.1px;color:#2c5cc5;-webkit-text-stroke:0.25px #2c5cc5;letter-spacing:0.15px">19266529503</div>
<svg style="position:absolute;left:2119.80px;top:797.56px;" width="6" height="20" viewBox="0 0 6 20"><g fill="#111"><circle cx="3" cy="2.6" r="2.2"/><circle cx="3" cy="10.2" r="2.2"/><circle cx="3" cy="17.4" r="2.2"/></g></svg>
<div style="position:absolute;left:126.20px;top:924.33px;width:26.60px;height:26.60px;background:#fff;border:2px solid #d3dce5;border-radius:5px;box-sizing:border-box"></div>
<div style="position:absolute;left:186.00px;top:906.13px;width:60.00px;height:60.00px;border-radius:50%;background:#d7d6f6"></div>
<div class="t" style="left:186px;top:906.13px;width:60px;height:60px;line-height:62px;text-align:center;font-size:24px;color:#a49ee6;-webkit-text-stroke:0.7px #a49ee6;transform:scaleX(0.86)">E</div>
<div class="t " style="left:261.00px;top:897.28px;font-size:21.8px;line-height:21.8px;color:#2c5cc5;-webkit-text-stroke:0.35px #2c5cc5">Ellia Alexander</div>
<div class="t " style="left:261.00px;top:927.19px;font-size:18.6px;line-height:18.6px;color:#2d2d2d;-webkit-text-stroke:0.25px #2d2d2d">Revenue Officer</div>
<div class="t " style="left:261.00px;top:955.42px;font-size:18.8px;line-height:18.8px;color:#2c5cc5;-webkit-text-stroke:0.25px #2c5cc5">Sandiz Enterprises</div>
<div class="t " style="left:547.00px;top:923.17px;font-size:24.3px;line-height:24.3px;color:#2e2e2e;-webkit-text-stroke:0.3px #2e2e2e">64</div>
<svg style="position:absolute;left:578.00px;top:922.63px;" width="21.3" height="24" viewBox="0 0 21.3 24"><path d="M7.9 24 H13.5 V10.6 L17.6 14.7 L21.3 10.9 L10.6 0.2 L0 10.9 L3.7 14.7 L7.9 10.5 Z" fill="#999999"/></svg>
<svg style="position:absolute;left:801.20px;top:921.63px;" width="20.4" height="19.5" viewBox="0 0 20.4 19.5"><path d="M10.2 0.6 L13.4 6.4 L19.9 7.6 L15.5 12.6 L16.4 19 L10.2 16.3 L4 19 L4.9 12.6 L0.5 7.6 L7 6.4 Z" fill="#f3922b" stroke="#f3922b" stroke-width="1" stroke-linejoin="round"/></svg>
<svg style="position:absolute;left:827.60px;top:921.63px;" width="20.4" height="19.5" viewBox="0 0 20.4 19.5"><path d="M10.2 0.6 L13.4 6.4 L19.9 7.6 L15.5 12.6 L16.4 19 L10.2 16.3 L4 19 L4.9 12.6 L0.5 7.6 L7 6.4 Z" fill="#f3922b" stroke="#f3922b" stroke-width="1" stroke-linejoin="round"/></svg>
<svg style="position:absolute;left:853.60px;top:921.63px;" width="20.4" height="19.5" viewBox="0 0 20.4 19.5"><path d="M10.2 0.6 L13.4 6.4 L19.9 7.6 L15.5 12.6 L16.4 19 L10.2 16.3 L4 19 L4.9 12.6 L0.5 7.6 L7 6.4 Z" fill="#f3922b" stroke="#f3922b" stroke-width="1" stroke-linejoin="round"/></svg>
<svg style="position:absolute;left:879.20px;top:921.63px;" width="20.4" height="19.5" viewBox="0 0 20.4 19.5"><path d="M10.2 0.6 L13.4 6.4 L19.9 7.6 L15.5 12.6 L16.4 19 L10.2 16.3 L4 19 L4.9 12.6 L0.5 7.6 L7 6.4 Z" fill="#f3922b" stroke="#f3922b" stroke-width="1" stroke-linejoin="round"/></svg>
<svg style="position:absolute;left:906.00px;top:921.63px;" width="20.4" height="19.5" viewBox="0 0 20.4 19.5"><path d="M10.2 0.6 L13.4 6.4 L19.9 7.6 L15.5 12.6 L16.4 19 L10.2 16.3 L4 19 L4.9 12.6 L0.5 7.6 L7 6.4 Z" fill="#d3dbe3" stroke="#d3dbe3" stroke-width="1" stroke-linejoin="round"/></svg>
<div class="t " style="left:1064.20px;top:927.39px;font-size:18.6px;line-height:18.6px;color:#333;-webkit-text-stroke:0.25px #333">Gururag Kalanidh</div>
<div class="t " style="left:1325.30px;top:927.71px;font-size:18.7px;line-height:18.7px;color:#2c5cc5;-webkit-text-stroke:0.25px #2c5cc5">e.alexander@sa...</div>
<div class="t " style="left:1586.30px;top:926.27px;font-size:19.1px;line-height:19.1px;color:#2c5cc5;-webkit-text-stroke:0.25px #2c5cc5;letter-spacing:0.15px">580531514</div>
<div class="t " style="left:1847.80px;top:926.27px;font-size:19.1px;line-height:19.1px;color:#2c5cc5;-webkit-text-stroke:0.25px #2c5cc5;letter-spacing:0.15px">19266529513</div>
<svg style="position:absolute;left:2119.80px;top:925.13px;" width="6" height="20" viewBox="0 0 6 20"><g fill="#111"><circle cx="3" cy="2.6" r="2.2"/><circle cx="3" cy="10.2" r="2.2"/><circle cx="3" cy="17.4" r="2.2"/></g></svg>
<div style="position:absolute;left:126.20px;top:1051.90px;width:26.60px;height:26.60px;background:#fff;border:2px solid #d3dce5;border-radius:5px;box-sizing:border-box"></div>
<svg style="position:absolute;left:186.00px;top:1033.70px;" width="60" height="60" viewBox="0 0 60 60"><defs><clipPath id="cm"><circle cx="30" cy="30" r="30"/></clipPath>
  <linearGradient id="gm" x1="0" y1="0" x2="1" y2="0"><stop offset="0" stop-color="#82adb5"/><stop offset="0.6" stop-color="#6c98a0"/><stop offset="1" stop-color="#5d8a92"/></linearGradient>
  <radialGradient id="fm" cx="0.45" cy="0.4" r="0.6"><stop offset="0" stop-color="#f6d6c8"/><stop offset="1" stop-color="#e5b3a0"/></radialGradient>
  <filter id="bm" x="-10%" y="-10%" width="120%" height="120%"><feGaussianBlur stdDeviation="0.55"/></filter></defs>
  <g clip-path="url(#cm)"><rect width="60" height="60" fill="url(#gm)"/><g filter="url(#bm)">
  <path d="M48.9 6 L38.8 48 L41 48 L51 7 Z" fill="#3e5d63"/>
  <path d="M13 26 C11 12 19 2 30 2 C40 2 47 9 46 20 C45.5 30 46 38 44 42 L38 44 L20 44 C15 43 12 38 13 26 Z" fill="#6f4b33"/>
  <path d="M10 36 C10 42 14 45 20 44 C20 40 17 36 14 33 Z" fill="#5e3e2a"/>
  <path d="M16.5 41 H37.6 V52 H16.5 Z" fill="#eec5b3"/>
  <ellipse cx="29.5" cy="26" rx="13.8" ry="16" fill="url(#fm)"/>
  <path d="M15.5 20 C17 9 26 7 33 8 C39 9 43.5 13 44 21 C39 15 25 13 15.5 20 Z" fill="#6f4b33"/>
  <path d="M18.7 23.6 H43.5" stroke="#8a8f94" stroke-width="1"/>
  <rect x="20.5" y="22" width="8" height="4.2" rx="1.5" fill="none" stroke="#8a8f94" stroke-width="0.8"/>
  <rect x="32" y="22" width="8" height="4.2" rx="1.5" fill="none" stroke="#8a8f94" stroke-width="0.8"/>
  <path d="M27.5 33.5 C30 35.5 34 35.5 36.5 33.5" stroke="#c9655c" stroke-width="1.6" fill="none"/>
  <path d="M0 60 L6 52 C10 50 15 49.5 19 50 C24 52 32 53 38 50 C43 50 47 51 50 53 L60 60 Z" fill="#1c2d4a"/>
  </g></g></svg>
<div class="t " style="left:261.00px;top:1024.85px;font-size:21.8px;line-height:21.8px;color:#2c5cc5;-webkit-text-stroke:0.35px #2c5cc5">Miley Walker</div>
<div class="t " style="left:261.00px;top:1054.76px;font-size:18.6px;line-height:18.6px;color:#2d2d2d;-webkit-text-stroke:0.25px #2d2d2d">Sales Manager</div>
<div class="t " style="left:261.00px;top:1082.99px;font-size:18.8px;line-height:18.8px;color:#2c5cc5;-webkit-text-stroke:0.25px #2c5cc5">Jentycs BizCorp</div>
<div class="t " style="left:547.00px;top:1050.74px;font-size:24.3px;line-height:24.3px;color:#2e2e2e;-webkit-text-stroke:0.3px #2e2e2e">68</div>
<svg style="position:absolute;left:577.80px;top:1050.20px;" width="21.3" height="24" viewBox="0 0 21.3 24"><path d="M7.9 24 H13.5 V10.6 L17.6 14.7 L21.3 10.9 L10.6 0.2 L0 10.9 L3.7 14.7 L7.9 10.5 Z" fill="#999999"/></svg>
<svg style="position:absolute;left:801.20px;top:1049.20px;" width="20.4" height="19.5" viewBox="0 0 20.4 19.5"><path d="M10.2 0.6 L13.4 6.4 L19.9 7.6 L15.5 12.6 L16.4 19 L10.2 16.3 L4 19 L4.9 12.6 L0.5 7.6 L7 6.4 Z" fill="#f3922b" stroke="#f3922b" stroke-width="1" stroke-linejoin="round"/></svg>
<svg style="position:absolute;left:827.60px;top:1049.20px;" width="20.4" height="19.5" viewBox="0 0 20.4 19.5"><path d="M10.2 0.6 L13.4 6.4 L19.9 7.6 L15.5 12.6 L16.4 19 L10.2 16.3 L4 19 L4.9 12.6 L0.5 7.6 L7 6.4 Z" fill="#f3922b" stroke="#f3922b" stroke-width="1" stroke-linejoin="round"/></svg>
<svg style="position:absolute;left:853.60px;top:1049.20px;" width="20.4" height="19.5" viewBox="0 0 20.4 19.5"><path d="M10.2 0.6 L13.4 6.4 L19.9 7.6 L15.5 12.6 L16.4 19 L10.2 16.3 L4 19 L4.9 12.6 L0.5 7.6 L7 6.4 Z" fill="#f3922b" stroke="#f3922b" stroke-width="1" stroke-linejoin="round"/></svg>
<svg style="position:absolute;left:879.20px;top:1049.20px;" width="20.4" height="19.5" viewBox="0 0 20.4 19.5"><path d="M10.2 0.6 L13.4 6.4 L19.9 7.6 L15.5 12.6 L16.4 19 L10.2 16.3 L4 19 L4.9 12.6 L0.5 7.6 L7 6.4 Z" fill="#f3922b" stroke="#f3922b" stroke-width="1" stroke-linejoin="round"/></svg>
<svg style="position:absolute;left:906.00px;top:1049.20px;" width="20.4" height="19.5" viewBox="0 0 20.4 19.5"><path d="M10.2 0.6 L13.4 6.4 L19.9 7.6 L15.5 12.6 L16.4 19 L10.2 16.3 L4 19 L4.9 12.6 L0.5 7.6 L7 6.4 Z" fill="#d3dbe3" stroke="#d3dbe3" stroke-width="1" stroke-linejoin="round"/></svg>
<div class="t " style="left:1064.20px;top:1054.96px;font-size:18.6px;line-height:18.6px;color:#333;-webkit-text-stroke:0.25px #333">Gururag Kalanidh</div>
<div class="t " style="left:1325.30px;top:1055.28px;font-size:18.7px;line-height:18.7px;color:#2c5cc5;-webkit-text-stroke:0.25px #2c5cc5">m.walker...</div>
<div style="position:absolute;left:1437.20px;top:1046.00px;width:35.40px;height:35.40px;border-radius:50%;border:1.4px solid #e2e2e2;box-sizing:border-box"></div>
<div class="t " style="left:1448.70px;top:1056.61px;font-size:15px;line-height:15px;color:#555;">+1</div>
<div class="t " style="left:1586.30px;top:1053.84px;font-size:19.1px;line-height:19.1px;color:#2c5cc5;-webkit-text-stroke:0.25px #2c5cc5;letter-spacing:0.15px">+10427255601</div>
<div class="t " style="left:1847.80px;top:1053.84px;font-size:19.1px;line-height:19.1px;color:#2c5cc5;-webkit-text-stroke:0.25px #2c5cc5;letter-spacing:0.15px">+19266529543</div>
<svg style="position:absolute;left:2119.80px;top:1052.70px;" width="6" height="20" viewBox="0 0 6 20"><g fill="#111"><circle cx="3" cy="2.6" r="2.2"/><circle cx="3" cy="10.2" r="2.2"/><circle cx="3" cy="17.4" r="2.2"/></g></svg>
<div style="position:absolute;left:126.20px;top:1179.48px;width:26.60px;height:26.60px;background:#fff;border:2px solid #d3dce5;border-radius:5px;box-sizing:border-box"></div>
<div style="position:absolute;left:186.00px;top:1161.28px;width:60.00px;height:60.00px;border-radius:50%;background:#fdd0d3"></div>
<div class="t" style="left:186px;top:1161.28px;width:60px;height:60px;line-height:62px;text-align:center;font-size:24px;color:#ee8087;-webkit-text-stroke:0.7px #ee8087;transform:scaleX(0.86)">F</div>
<div class="t " style="left:261.00px;top:1152.42px;font-size:21.8px;line-height:21.8px;color:#2c5cc5;-webkit-text-stroke:0.35px #2c5cc5">Fenton Andrews</div>
<div class="t " style="left:261.00px;top:1182.33px;font-size:18.6px;line-height:18.6px;color:#2d2d2d;-webkit-text-stroke:0.25px #2d2d2d">Marketing Officer</div>
<div class="t " style="left:261.00px;top:1210.56px;font-size:18.8px;line-height:18.8px;color:#2c5cc5;-webkit-text-stroke:0.25px #2c5cc5">Mylar Tech</div>
<div class="t " style="left:547.00px;top:1178.31px;font-size:24.3px;line-height:24.3px;color:#2e2e2e;-webkit-text-stroke:0.3px #2e2e2e">63</div>
<svg style="position:absolute;left:577.30px;top:1177.78px;" width="21.3" height="24" viewBox="0 0 21.3 24"><path d="M7.9 24 H13.5 V10.6 L17.6 14.7 L21.3 10.9 L10.6 0.2 L0 10.9 L3.7 14.7 L7.9 10.5 Z" fill="#999999"/></svg>
<svg style="position:absolute;left:801.20px;top:1176.78px;" width="20.4" height="19.5" viewBox="0 0 20.4 19.5"><path d="M10.2 0.6 L13.4 6.4 L19.9 7.6 L15.5 12.6 L16.4 19 L10.2 16.3 L4 19 L4.9 12.6 L0.5 7.6 L7 6.4 Z" fill="#f3922b" stroke="#f3922b" stroke-width="1" stroke-linejoin="round"/></svg>
<svg style="position:absolute;left:827.60px;top:1176.78px;" width="20.4" height="19.5" viewBox="0 0 20.4 19.5"><path d="M10.2 0.6 L13.4 6.4 L19.9 7.6 L15.5 12.6 L16.4 19 L10.2 16.3 L4 19 L4.9 12.6 L0.5 7.6 L7 6.4 Z" fill="#f3922b" stroke="#f3922b" stroke-width="1" stroke-linejoin="round"/></svg>
<svg style="position:absolute;left:853.60px;top:1176.78px;" width="20.4" height="19.5" viewBox="0 0 20.4 19.5"><path d="M10.2 0.6 L13.4 6.4 L19.9 7.6 L15.5 12.6 L16.4 19 L10.2 16.3 L4 19 L4.9 12.6 L0.5 7.6 L7 6.4 Z" fill="#f3922b" stroke="#f3922b" stroke-width="1" stroke-linejoin="round"/></svg>
<svg style="position:absolute;left:879.20px;top:1176.78px;" width="20.4" height="19.5" viewBox="0 0 20.4 19.5"><path d="M10.2 0.6 L13.4 6.4 L19.9 7.6 L15.5 12.6 L16.4 19 L10.2 16.3 L4 19 L4.9 12.6 L0.5 7.6 L7 6.4 Z" fill="#f3922b" stroke="#f3922b" stroke-width="1" stroke-linejoin="round"/></svg>
<svg style="position:absolute;left:906.00px;top:1176.78px;" width="20.4" height="19.5" viewBox="0 0 20.4 19.5"><path d="M10.2 0.6 L13.4 6.4 L19.9 7.6 L15.5 12.6 L16.4 19 L10.2 16.3 L4 19 L4.9 12.6 L0.5 7.6 L7 6.4 Z" fill="#d3dbe3" stroke="#d3dbe3" stroke-width="1" stroke-linejoin="round"/></svg>
<div class="t " style="left:1064.20px;top:1182.53px;font-size:18.6px;line-height:18.6px;color:#333;-webkit-text-stroke:0.25px #333">Gururag Kalanidh</div>
<div class="t " style="left:1325.30px;top:1182.85px;font-size:18.7px;line-height:18.7px;color:#2c5cc5;-webkit-text-stroke:0.25px #2c5cc5">fenton.andrews...</div>
<div class="t " style="left:1586.30px;top:1181.41px;font-size:19.1px;line-height:19.1px;color:#2c5cc5;-webkit-text-stroke:0.25px #2c5cc5;letter-spacing:0.15px">748938005</div>
<div class="t " style="left:1847.80px;top:1181.41px;font-size:19.1px;line-height:19.1px;color:#2c5cc5;-webkit-text-stroke:0.25px #2c5cc5;letter-spacing:0.15px">21266529548</div>
<svg style="position:absolute;left:2119.80px;top:1180.28px;" width="6" height="20" viewBox="0 0 6 20"><g fill="#111"><circle cx="3" cy="2.6" r="2.2"/><circle cx="3" cy="10.2" r="2.2"/><circle cx="3" cy="17.4" r="2.2"/></g></svg>
<div style="position:absolute;left:126.20px;top:1307.05px;width:26.60px;height:26.60px;background:#fff;border:2px solid #d3dce5;border-radius:5px;box-sizing:border-box"></div>
<div style="position:absolute;left:186.00px;top:1288.85px;width:60.00px;height:60.00px;border-radius:50%;background:#b3e3e8"></div>
<div class="t" style="left:186px;top:1288.85px;width:60px;height:60px;line-height:62px;text-align:center;font-size:24px;color:#4dbcc6;-webkit-text-stroke:0.7px #4dbcc6;transform:scaleX(0.86)">A</div>
<div class="t " style="left:261.00px;top:1279.99px;font-size:21.8px;line-height:21.8px;color:#2c5cc5;-webkit-text-stroke:0.35px #2c5cc5">Arnold Stewart</div>
<div class="t " style="left:261.00px;top:1309.90px;font-size:18.6px;line-height:18.6px;color:#2d2d2d;-webkit-text-stroke:0.25px #2d2d2d">Revenue Officer</div>
<div class="t " style="left:261.00px;top:1338.13px;font-size:18.8px;line-height:18.8px;color:#2c5cc5;-webkit-text-stroke:0.25px #2c5cc5">Moon Pharmaceutical</div>
<div class="t " style="left:547.00px;top:1305.88px;font-size:24.3px;line-height:24.3px;color:#2e2e2e;-webkit-text-stroke:0.3px #2e2e2e">66</div>
<svg style="position:absolute;left:577.80px;top:1305.35px;" width="21.3" height="24" viewBox="0 0 21.3 24"><path d="M7.9 24 H13.5 V10.6 L17.6 14.7 L21.3 10.9 L10.6 0.2 L0 10.9 L3.7 14.7 L7.9 10.5 Z" fill="#999999"/></svg>
<svg style="position:absolute;left:801.20px;top:1304.35px;" width="20.4" height="19.5" viewBox="0 0 20.4 19.5"><path d="M10.2 0.6 L13.4 6.4 L19.9 7.6 L15.5 12.6 L16.4 19 L10.2 16.3 L4 19 L4.9 12.6 L0.5 7.6 L7 6.4 Z" fill="#f3922b" stroke="#f3922b" stroke-width="1" stroke-linejoin="round"/></svg>
<svg style="position:absolute;left:827.60px;top:1304.35px;" width="20.4" height="19.5" viewBox="0 0 20.4 19.5"><path d="M10.2 0.6 L13.4 6.4 L19.9 7.6 L15.5 12.6 L16.4 19 L10.2 16.3 L4 19 L4.9 12.6 L0.5 7.6 L7 6.4 Z" fill="#f3922b" stroke="#f3922b" stroke-width="1" stroke-linejoin="round"/></svg>
<svg style="position:absolute;left:853.60px;top:1304.35px;" width="20.4" height="19.5" viewBox="0 0 20.4 19.5"><path d="M10.2 0.6 L13.4 6.4 L19.9 7.6 L15.5 12.6 L16.4 19 L10.2 16.3 L4 19 L4.9 12.6 L0.5 7.6 L7 6.4 Z" fill="#f3922b" stroke="#f3922b" stroke-width="1" stroke-linejoin="round"/></svg>
<svg style="position:absolute;left:879.20px;top:1304.35px;" width="20.4" height="19.5" viewBox="0 0 20.4 19.5"><path d="M10.2 0.6 L13.4 6.4 L19.9 7.6 L15.5 12.6 L16.4 19 L10.2 16.3 L4 19 L4.9 12.6 L0.5 7.6 L7 6.4 Z" fill="#f3922b" stroke="#f3922b" stroke-width="1" stroke-linejoin="round"/></svg>
<svg style="position:absolute;left:906.00px;top:1304.35px;" width="20.4" height="19.5" viewBox="0 0 20.4 19.5"><path d="M10.2 0.6 L13.4 6.4 L19.9 7.6 L15.5 12.6 L16.4 19 L10.2 16.3 L4 19 L4.9 12.6 L0.5 7.6 L7 6.4 Z" fill="#d3dbe3" stroke="#d3dbe3" stroke-width="1" stroke-linejoin="round"/></svg>
<div class="t " style="left:1064.20px;top:1310.10px;font-size:18.6px;line-height:18.6px;color:#333;-webkit-text-stroke:0.25px #333">Gururag Kalanidh</div>
<div class="t " style="left:1325.30px;top:1310.42px;font-size:18.7px;line-height:18.7px;color:#2c5cc5;-webkit-text-stroke:0.25px #2c5cc5">Auto-enrich pro...</div>
<div class="t " style="left:1586.30px;top:1308.98px;font-size:19.1px;line-height:19.1px;color:#2c5cc5;-webkit-text-stroke:0.25px #2c5cc5;letter-spacing:0.15px">674830147</div>
<div class="t " style="left:1847.80px;top:1308.98px;font-size:19.1px;line-height:19.1px;color:#2c5cc5;-webkit-text-stroke:0.25px #2c5cc5;letter-spacing:0.15px">20266536561</div>
<svg style="position:absolute;left:2119.80px;top:1307.85px;" width="6" height="20" viewBox="0 0 6 20"><g fill="#111"><circle cx="3" cy="2.6" r="2.2"/><circle cx="3" cy="10.2" r="2.2"/><circle cx="3" cy="17.4" r="2.2"/></g></svg>
<div style="position:absolute;left:1838.00px;top:101.00px;width:213.50px;height:169.00px;background:#fff;box-shadow:0 4px 10px rgba(0,0,0,0.10)"></div>
<div style="position:absolute;left:1839.00px;top:148.00px;width:170.00px;height:1.50px;background:#dfe3e8"></div>
<div style="position:absolute;left:2008.00px;top:101.00px;width:43.50px;height:48.50px;border-left:1.5px solid #17344b;border-bottom:1.5px solid #17344b;box-sizing:border-box;background:#fff"></div>
<svg style="position:absolute;left:1855.00px;top:115.50px;" width="18" height="18" viewBox="0 0 18 18"><g fill="none" stroke="#222" stroke-width="1.7"><rect x="1" y="1" width="16" height="16" rx="1.5"/><path d="M1 5.5 H17 M6.6 5.5 V17 M11.4 5.5 V17"/></g></svg>
<div class="t " style="left:1882.40px;top:114.73px;font-size:19.1px;line-height:19.1px;color:#2b2b2b;">Edit columns</div>
<svg style="position:absolute;left:2025.00px;top:121.60px;" width="12" height="6.5" viewBox="0 0 12 6.5"><path d="M0 0 H11.6 L5.8 6.2 Z" fill="#222"/></svg>
<div class="t " style="left:1868.00px;top:172.83px;font-size:19.1px;line-height:19.1px;color:#2b2b2b;">Edit columns</div>
<div class="t " style="left:1868.00px;top:225.13px;font-size:19.1px;line-height:19.1px;color:#2b2b2b;">Add columns</div>
<div style="position:absolute;left:1836.00px;top:99.00px;width:217.50px;height:172.00px;border:3.3px solid #f7280f;box-sizing:border-box"></div>
<div style="position:absolute;left:2091.20px;top:1265.90px;width:53.80px;height:53.80px;border-radius:50%;background:#17344b;box-shadow:0 2px 14px rgba(0,0,0,0.22)"></div>
<div class="t" style="left:2091.2px;top:1265.9px;width:53.8px;height:53.8px;line-height:55px;text-align:center;font-size:27px;color:#fff;-webkit-text-stroke:1px #fff">?</div>
<div style="position:absolute;left:2160.00px;top:0.00px;width:1.00px;height:1351.00px;background:#000"></div>
<div style="position:absolute;left:0.00px;top:1350.00px;width:2161.00px;height:1.00px;background:#000"></div>
</body></html>
